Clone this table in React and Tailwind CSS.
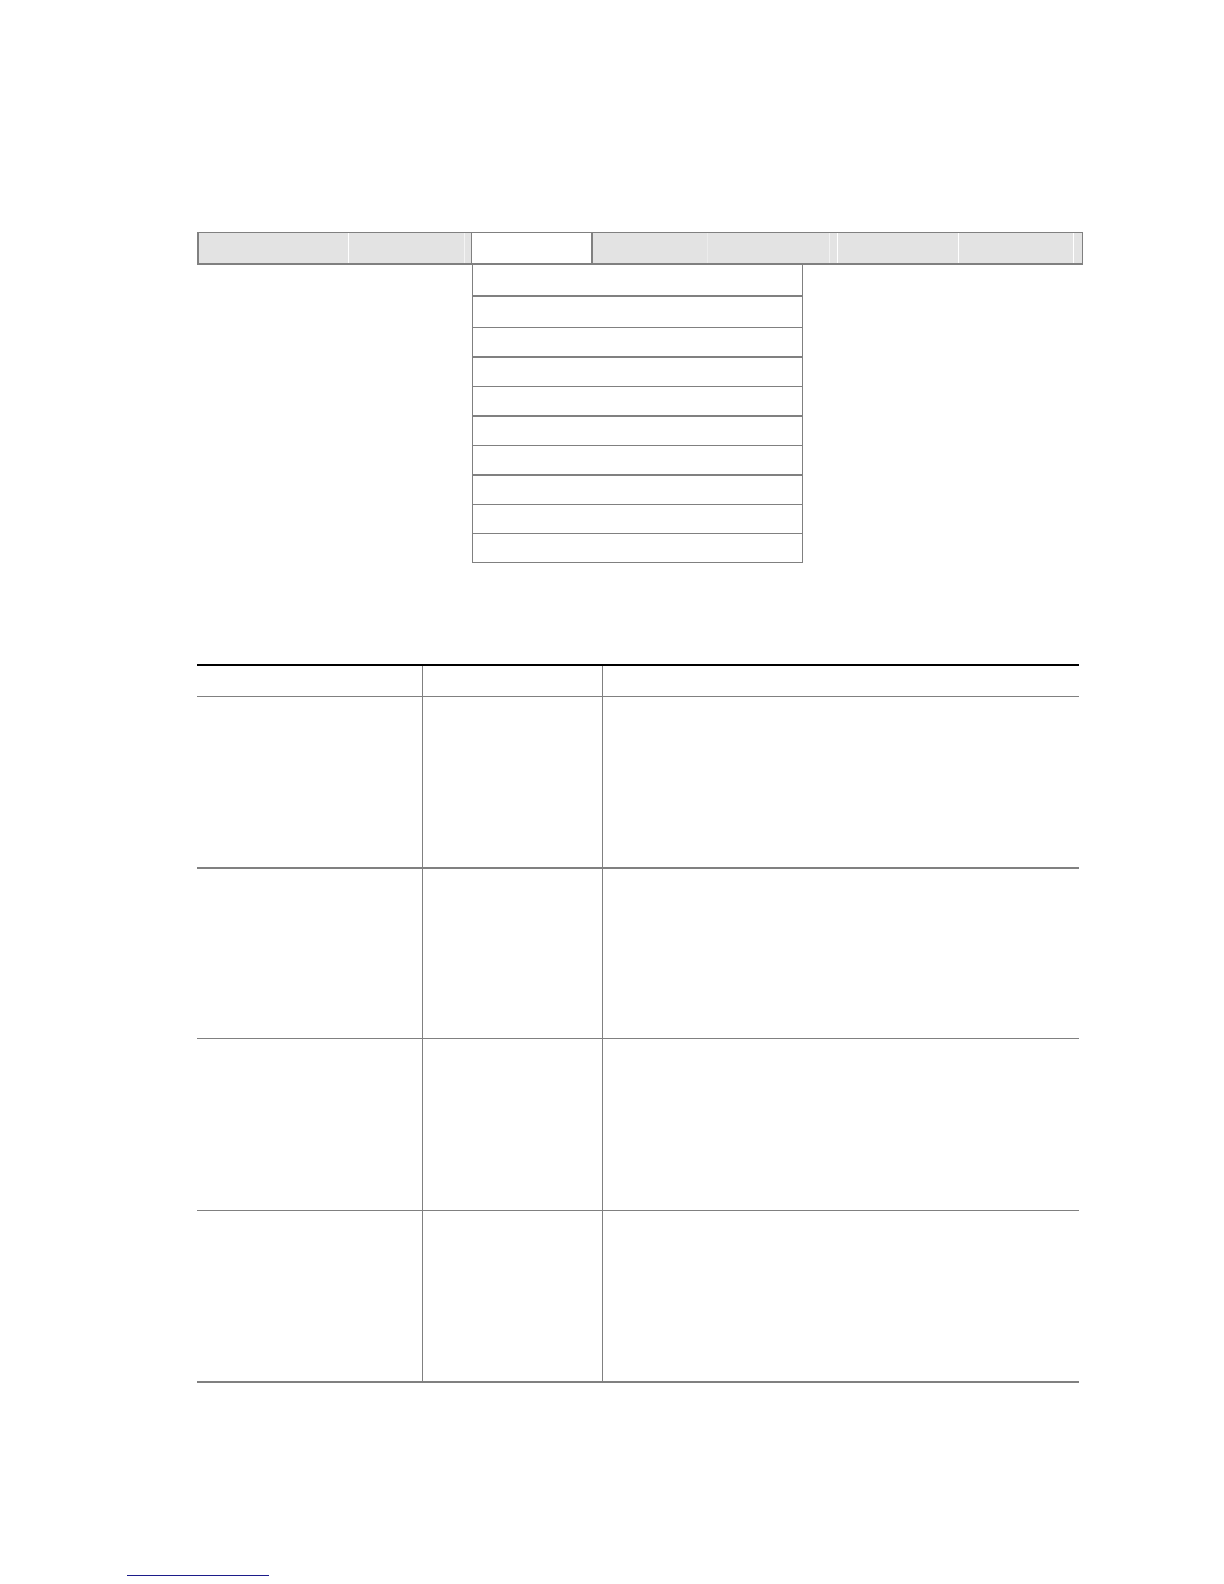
export default function App() {
  const ddRows = [
    { h: "h-[32px]", b: "border-b-2" },
    { h: "h-[31px]", b: "border-b" },
    { h: "h-[30px]", b: "border-b-2" },
    { h: "h-[29px]", b: "border-b" },
    { h: "h-[30px]", b: "border-b-2" },
    { h: "h-[29px]", b: "border-b" },
    { h: "h-[30px]", b: "border-b-2" },
    { h: "h-[29px]", b: "border-b" },
    { h: "h-[29px]", b: "border-b" },
    { h: "h-[29px]", b: "border-b" },
  ];
  const rows = [
    { h: "h-[170px]", b: "border-b-2" },
    { h: "h-[169px]", b: "border-b" },
    { h: "h-[171px]", b: "border-b" },
    { h: "h-[170px]", b: "border-b-2" },
  ];
  return (
    <div className="w-[1224px] min-h-[1584px] bg-white" style={{ fontFamily: '"Liberation Sans", Arial, sans-serif' }}>
      <div className="pt-[232px] pl-[197px]">
        <div className="flex w-[886px] h-[33px] border-t border-r border-l-2 border-b-2 border-[#808080] bg-[#e3e3e3]">
          <div className="w-[149px] h-full" />
          <div className="w-px h-full bg-white" />
          <div className="w-[122px] h-full flex justify-end">
            <div className="w-px h-full bg-[#f4f4f4] mr-[6px]" />
          </div>
          <div className="w-[122px] h-full bg-white border-l border-r-2 border-[#808080]" />
          <div className="w-[244px] h-full flex">
            <div className="w-[114px]" />
            <div className="w-px h-full bg-[#ececec]" />
            <div className="w-[121px]" />
            <div className="w-px h-full bg-[#f2f2f2]" />
          </div>
          <div className="w-px h-full bg-white" />
          <div className="w-[120px] h-full" />
          <div className="w-px h-full bg-white" />
          <div className="w-[120px] h-full flex justify-end">
            <div className="w-px h-full bg-white mr-[5px]" />
          </div>
        </div>
      </div>
      <div className="ml-[472px] w-[331px] border-x border-[#808080] bg-white">
        {ddRows.map((r, i) => (
          <div key={i} className={`${r.h} ${r.b} border-[#808080]`} />
        ))}
      </div>
      <div className="ml-[197px] mt-[101px] w-[882px] border-t-2 border-black">
        <div className="flex h-[31px] border-b border-[#808080]">
          <div className="w-[226px] border-r border-[#808080]" />
          <div className="w-[180px] border-r border-[#808080]" />
          <div className="flex-1" />
        </div>
        {rows.map((r, i) => (
          <div key={i} className={`flex ${r.h} ${r.b} border-[#808080] box-content`}>
            <div className="w-[226px] border-r border-[#808080]" />
            <div className="w-[180px] border-r border-[#808080]" />
            <div className="flex-1" />
          </div>
        ))}
      </div>
      <div className="ml-[127px] mt-[192px] w-[142px] h-px bg-[#1c1c8a]" />
    </div>
  );
}
